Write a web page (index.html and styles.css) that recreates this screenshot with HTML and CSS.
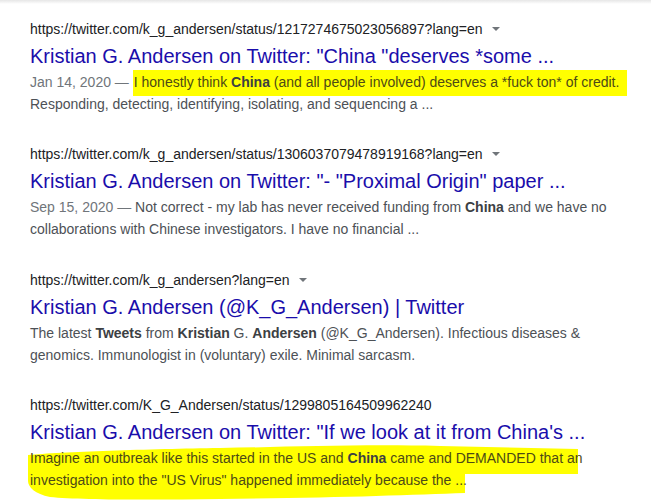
FILE: index.html
```html
<!DOCTYPE html>
<html lang="en">
<head>
<meta charset="utf-8">
<title>Search results</title>
<link rel="stylesheet" href="styles.css">
</head>
<body>
<div class="topshade"></div>
<main class="results">
  <div class="result">
    <div class="url">https://twitter.com/k_g_andersen/status/1217274675023056897?lang=en<svg class="caret" width="8" height="4" viewBox="0 0 8 4"><path d="M0 0H8L4 4Z" fill="#70757a"/></svg></div>
    <h3 class="title">Kristian G. Andersen on Twitter: "China "deserves *some ...</h3>
    <div class="snippet"><span class="date">Jan 14, 2020 — </span><span class="mark">I honestly think <b>China</b> (and all people involved) deserves a *fuck ton* of credit.</span> Responding, detecting, identifying, isolating, and sequencing a ...</div>
  </div>
  <div class="result">
    <div class="url">https://twitter.com/k_g_andersen/status/1306037079478919168?lang=en<svg class="caret" width="8" height="4" viewBox="0 0 8 4"><path d="M0 0H8L4 4Z" fill="#70757a"/></svg></div>
    <h3 class="title">Kristian G. Andersen on Twitter: "- "Proximal Origin" paper ...</h3>
    <div class="snippet"><span class="date">Sep 15, 2020 — </span>Not correct - my lab has never received funding from <b>China</b> and we have no collaborations with Chinese investigators. I have no financial ...</div>
  </div>
  <div class="result">
    <div class="url">https://twitter.com/k_g_andersen?lang=en<svg class="caret" width="8" height="4" viewBox="0 0 8 4"><path d="M0 0H8L4 4Z" fill="#70757a"/></svg></div>
    <h3 class="title">Kristian G. Andersen (@K_G_Andersen) | Twitter</h3>
    <div class="snippet">The latest <b>Tweets</b> from <b>Kristian</b> G. <b>Andersen</b> (@K_G_Andersen). Infectious diseases &amp; genomics. Immunologist in (voluntary) exile. Minimal sarcasm.</div>
  </div>
  <div class="result">
    <div class="url">https://twitter.com/K_G_Andersen/status/1299805164509962240</div>
    <h3 class="title">Kristian G. Andersen on Twitter: "If we look at it from China's ...</h3>
    <div class="snippet marked">
      <svg class="marker" width="560" height="60" viewBox="0 0 560 60"><path d="M-2 8 C30 5 120 2 190 1 C260 0 330 -3 410 -1 L548 2 L548 27 L435 27 L435 46 C380 48 300 51 190 52 C120 53 50 53 20 50 C5 47 -2 40 -2 34 Z" fill="#ffff00"/></svg>
      <span class="over">Imagine an outbreak like this started in the US and <b>China</b> came and DEMANDED that an investigation into the "US Virus" happened immediately because the ...</span>
    </div>
  </div>
</main>
</body>
</html>
```

FILE: styles.css
```css
html, body {
  margin: 0;
  padding: 0;
  background: #ffffff;
}

body {
  font-family: "Liberation Sans", Arial, sans-serif;
  width: 651px;
  height: 503px;
  overflow: hidden;
  position: relative;
}

.topshade {
  position: absolute;
  top: 0;
  left: 0;
  right: 0;
  height: 4px;
  background: linear-gradient(#e6e6e6, #ffffff);
}

.results {
  padding: 19px 0 0 30px;
}

.result {
  margin-bottom: 29.3px;
  width: 600px;
}

.url {
  font-size: 14px;
  line-height: 20px;
  color: #202124;
  white-space: nowrap;
}

.caret {
  margin-left: 9px;
  vertical-align: 3px;
}

.title {
  margin: 4px 0 0 0;
  font-size: 20px;
  line-height: 26px;
  font-weight: normal;
  color: #1a0dab;
  white-space: nowrap;
}

.snippet {
  margin-top: 2px;
  font-size: 14px;
  line-height: 22px;
  color: #4d5156;
}

.snippet b {
  font-weight: bold;
  color: #3c4043;
}

.date {
  color: #70757a;
}

.mark {
  background: #ffff00;
  padding: 4px 8px 6px 1px;
  color: #4d4a16;
}

.marked {
  position: relative;
}

.marker {
  position: absolute;
  left: 0;
  top: 0;
  overflow: visible;
}

.over {
  position: relative;
  color: #4d4a16;
}
```
